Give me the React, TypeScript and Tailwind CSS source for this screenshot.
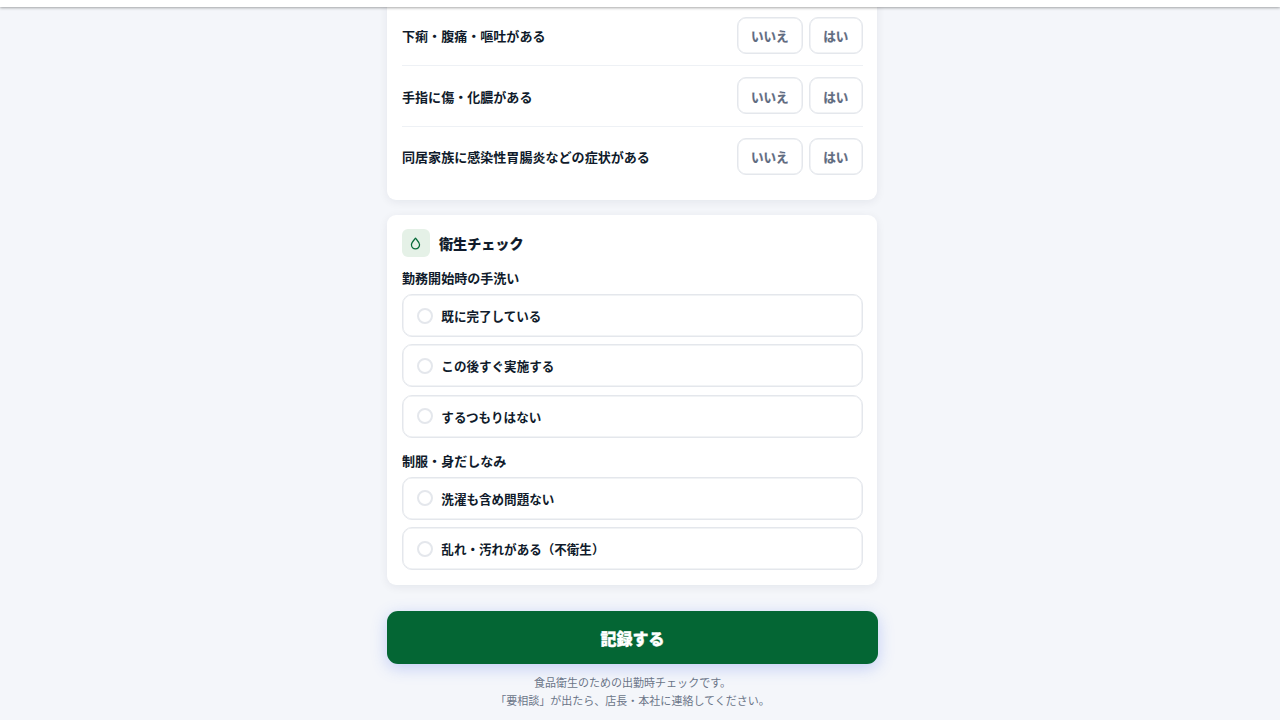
const symptoms = ['下痢・腹痛・嘔吐がある', '手指に傷・化膿がある', '同居家族に感染性胃腸炎などの症状がある'];

const groups = [
  { title: '勤務開始時の手洗い', options: ['既に完了している', 'この後すぐ実施する', 'するつもりはない'] },
  { title: '制服・身だしなみ', options: ['洗濯も含め問題ない', '乱れ・汚れがある（不衛生）'] },
];

function AnswerButton({ label }: { label: string }) {
  return (
    <button className="h-[37px] rounded-[9px] border border-[#e4e7ec] bg-white px-[13.4px] pt-[2px] text-[12.55px] leading-none font-bold text-[#5f6b80] shadow-[inset_0_0_0_0.5px_#e4e7ec] [-webkit-text-stroke:0.2px_#5f6b80]">
      {label}
    </button>
  );
}

function Option({ label }: { label: string }) {
  return (
    <label className="flex h-[43px] items-center gap-[8.7px] rounded-[10px] border border-[#e4e7ec] bg-white pl-[13.7px] text-[12.55px] shadow-[inset_0_0_0_0.5px_#e4e7ec]">
      <span className="mt-[0.6px] size-4 shrink-0 rounded-full border-2 border-[#e4e7ec]" />
      <span className="pt-[2px] font-semibold">{label}</span>
    </label>
  );
}

export default function App() {
  return (
    <div className="h-screen overflow-hidden bg-[#f4f6fa] font-['Noto_Sans_CJK_JP',sans-serif] text-[#101b2b]">
      <header className="relative z-10 h-[7px] bg-white shadow-[0_1px_3px_rgba(0,0,0,0.35)]" />
      <div className="flex justify-center pr-[15px]">
        <main className="-mt-4 w-[491px]">
          <section className="mr-[0.6px] ml-[0.4px] h-[209.4px] rounded-[9px] bg-white px-[14.6px] pt-[14.8px] shadow-[0_2px_10px_rgba(20,30,60,0.07)]">
            {symptoms.map((s) => (
              <div key={s} className="flex h-[60.4px] items-center justify-between border-b border-[#eef1f5] last:border-transparent">
                <span className="pt-px text-[13.05px] font-semibold">{s}</span>
                <div className="flex gap-[6px]">
                  <AnswerButton label="いいえ" />
                  <AnswerButton label="はい" />
                </div>
              </div>
            ))}
          </section>

          <section className="mr-[0.6px] ml-[0.4px] mt-[14.5px] h-[370.5px] rounded-[9px] bg-white px-[14.6px] pt-[14.5px] shadow-[0_2px_10px_rgba(20,30,60,0.07)]">
            <div className="flex h-7 items-center gap-[9px]">
              <span className="flex size-7 items-center justify-center rounded-md bg-[#e5f1e7]">
                <svg className="h-[13px] w-[13px]" viewBox="0 0 24 24" fill="none" stroke="#066a38" strokeWidth="2.3" strokeLinejoin="round">
                  <path d="M12 2.2C10 5 4.5 9.5 4.5 14.5a7.5 7.5 0 0 0 15 0C19.5 9.5 14 5 12 2.2Z" />
                </svg>
              </span>
              <h2 className="text-[14.1px] leading-none font-extrabold [-webkit-text-stroke:0.1px_#101b2b]">衛生チェック</h2>
            </div>
            {groups.map((g) => (
              <div key={g.title} className="pt-[10.5px] not-last:pb-[2.5px]">
                <h3 className="h-[26px] text-[13.05px] leading-[19px] font-semibold">{g.title}</h3>
                <div className="flex flex-col gap-[7.4px]">
                  {g.options.map((o) => (
                    <Option key={o} label={o} />
                  ))}
                </div>
              </div>
            ))}
          </section>

          <button className="mt-[25.6px] h-[53px] w-full rounded-[11px] bg-[#046634] pt-[2px] text-[16px] font-black text-white shadow-[0_4px_16px_rgba(60,100,240,0.27)] [-webkit-text-stroke:0.35px_white]">
            記録する
          </button>
          <p className="mt-[9px] text-center text-[11.02px] leading-[18px] text-[#6b7588]">
            食品衛生のための出勤時チェックです。
            <br />
            「要相談」が出たら、店長・本社に連絡してください。
          </p>
        </main>
      </div>
    </div>
  );
}
